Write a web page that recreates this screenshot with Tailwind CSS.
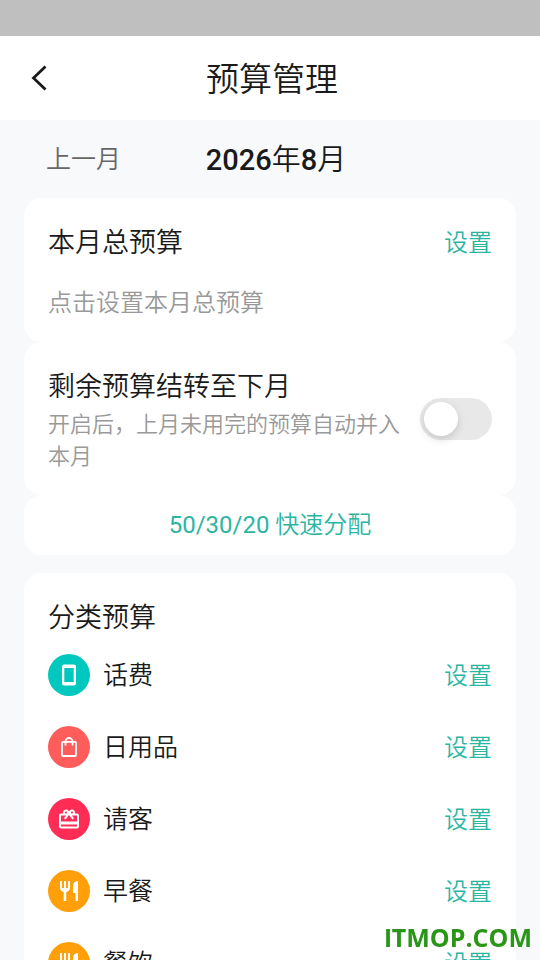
<!DOCTYPE html>
<html lang="zh-CN">
<head>
<meta charset="utf-8">
<meta name="viewport" content="width=device-width, initial-scale=1">
<title>预算管理</title>
<script src="https://cdn.jsdelivr.net/npm/@tailwindcss/browser@4"></script>
</head>
<body class="flex h-screen flex-col overflow-hidden bg-[#f8f9fb] font-['Roboto','Noto_Sans_CJK_SC',sans-serif] font-[350] text-[#1a1a1a]">
<div class="h-9 shrink-0 bg-[#bfbfbf]"></div>
<header class="grid h-21 shrink-0 grid-cols-[80px_1fr_80px] items-center bg-white">
  <button type="button" aria-label="返回" class="flex h-full items-center pl-[30px]">
    <svg class="size-6 overflow-visible" viewBox="0 0 24 24" fill="none" stroke="#1a1a1a" stroke-width="2.8"><path d="M15.500 .5 3.500 12 15.500 23.500"/></svg>
  </button>
  <h1 class="pt-1 pl-1 text-center text-[33px] leading-[48px] font-[350]">预算管理</h1>
</header>
<main class="min-h-0 flex-1 overflow-y-auto px-6 [scrollbar-width:none]">
  <nav aria-label="月份" class="grid h-[78px] grid-cols-[1fr_auto_1fr] items-center px-[22px] pt-[2px]">
    <button type="button" class="justify-self-start text-[25px] leading-9 text-[#666]">上一月</button>
    <h2 class="pl-3 text-[29px] leading-10 font-medium">2026<span class="font-[350]">年</span>8<span class="font-[350]">月</span></h2>
  </nav>

  <section class="h-36 rounded-[18px] bg-white px-6 pt-[25px]">
    <div class="flex items-center justify-between">
      <h2 class="text-[27px] leading-10 font-[350]">本月总预算</h2>
      <button type="button" class="text-[24px] leading-9 text-[#2bb5a3]">设置</button>
    </div>
    <p class="pt-[22px] text-[24px] leading-9 text-[#999]">点击设置本月总预算</p>
  </section>

  <section class="flex items-center gap-5 rounded-[18px] bg-white px-6 pt-[22px] pb-[22px]">
    <label for="carry" class="min-w-0 flex-1 pt-[3px]">
      <span class="block text-[27px] leading-10 font-[350]">剩余预算结转至下月</span>
      <span class="block pt-[2px] text-[22px] leading-8 text-[#999]">开启后，上月未用完的预算自动并入本月</span>
    </label>
    <input id="carry" type="checkbox" role="switch" class="h-[42px] w-[72px] shrink-0 appearance-none rounded-full bg-[#e8e8e8] p-1 before:block before:size-[34px] before:rounded-full before:bg-white before:shadow-[0_3px_8px_rgba(0,0,0,0.15)] checked:bg-[#2bb5a3] checked:before:ml-auto">
  </section>

  <button type="button" class="block h-15 w-full rounded-[18px] bg-white text-center text-[24px] leading-9 text-[#2bb5a3]"><span class="font-normal">50/30/20</span> 快速分配</button>

  <section class="mt-[18px] rounded-[18px] bg-white px-6 pt-[25px]">
    <h2 class="pb-[1px] text-[27px] leading-10 font-[350]">分类预算</h2>
    <ul>
      <li class="flex h-[72px] items-center gap-[13px]">
        <svg class="size-[42px]" viewBox="0 0 42 42"><circle cx="21" cy="21" r="21" fill="#00c8be"/><path fill="#fff" fill-rule="evenodd" d="M16 10.500h10a2 2 0 0 1 2 2v17a2 2 0 0 1-2 2H16a2 2 0 0 1-2-2v-17a2 2 0 0 1 2-2zm.3 3.500v14h9.400V14z"/></svg>
        <span class="flex-1 pt-[2px] text-[25px] leading-9">话费</span>
        <button type="button" class="pt-[2px] text-[24px] leading-9 text-[#2bb5a3]">设置</button>
      </li>
      <li class="flex h-[72px] items-center gap-[13px]">
        <svg class="size-[42px]" viewBox="0 0 42 42"><circle cx="21" cy="21" r="21" fill="#ff5c5c"/><g fill="none" stroke="#fff" stroke-width="1.800"><rect x="14" y="15.800" width="14" height="14.200" rx="1"/><path d="M17.500 19.500v-4a3.500 3.500 0 0 1 7 0v4"/></g></svg>
        <span class="flex-1 pt-[2px] text-[25px] leading-9">日用品</span>
        <button type="button" class="pt-[2px] text-[24px] leading-9 text-[#2bb5a3]">设置</button>
      </li>
      <li class="flex h-[72px] items-center gap-[13px]">
        <svg class="size-[42px]" viewBox="0 0 42 42"><circle cx="21" cy="21" r="21" fill="#ff2d55"/><g transform="translate(9 9.500)" fill="#fff"><path d="M20 6h-2.180c.11-.31.180-.65.180-1 0-1.660-1.340-3-3-3-1.050 0-1.960.54-2.500 1.350l-.5.670-.5-.68C10.960 2.540 10.050 2 9 2 7.340 2 6 3.340 6 5c0 .35.070.69.180 1H4c-1.110 0-1.990.89-1.990 2L2 19c0 1.110.89 2 2 2h16c1.110 0 2-.89 2-2V8c0-1.110-.89-2-2-2zm-5-2c.55 0 1 .45 1 1s-.45 1-1 1-1-.45-1-1 .45-1 1-1zM9 4c.55 0 1 .45 1 1s-.45 1-1 1-1-.45-1-1 .45-1 1-1zm11 15H4v-2h16v2zm0-5H4V8h5.080L7 10.830 8.620 12 11 8.760l1-1.360 1 1.360L15.380 12 17 10.830 14.920 8H20v6z"/></g></svg>
        <span class="flex-1 pt-[2px] text-[25px] leading-9">请客</span>
        <button type="button" class="pt-[2px] text-[24px] leading-9 text-[#2bb5a3]">设置</button>
      </li>
      <li class="flex h-[72px] items-center gap-[13px]">
        <svg class="size-[42px]" viewBox="0 0 42 42"><circle cx="21" cy="21" r="21" fill="#ff9f0a"/><path fill="#fff" transform="translate(9 9)" d="M11 9H9V2H7v7H5V2H3v7c0 2.120 1.660 3.840 3.750 3.970V22h2.500v-9.030C11.340 12.840 13 11.120 13 9V2h-2v7zm5-3v8h2.500v8H21V2c-2.760 0-5 2.240-5 4z"/></svg>
        <span class="flex-1 pt-[2px] text-[25px] leading-9">早餐</span>
        <button type="button" class="pt-[2px] text-[24px] leading-9 text-[#2bb5a3]">设置</button>
      </li>
      <li class="flex h-[72px] items-center gap-[13px]">
        <svg class="size-[42px]" viewBox="0 0 42 42"><circle cx="21" cy="21" r="21" fill="#ff9f0a"/><path fill="#fff" transform="translate(9 9)" d="M11 9H9V2H7v7H5V2H3v7c0 2.120 1.660 3.840 3.750 3.970V22h2.500v-9.030C11.340 12.840 13 11.120 13 9V2h-2v7zm5-3v8h2.500v8H21V2c-2.760 0-5 2.240-5 4z"/></svg>
        <span class="flex-1 pt-[2px] text-[25px] leading-9">餐饮</span>
        <button type="button" class="pt-[2px] text-[24px] leading-9 text-[#2bb5a3]">设置</button>
      </li>
    </ul>
  </section>
</main>
<div class="fixed right-2 bottom-[5px] font-['Open_Sans',sans-serif] text-[25px] leading-9 font-bold text-[#2a9617]"><span class="font-['Lato'] font-black">I</span>TMOP.COM</div>
</body>
</html>
